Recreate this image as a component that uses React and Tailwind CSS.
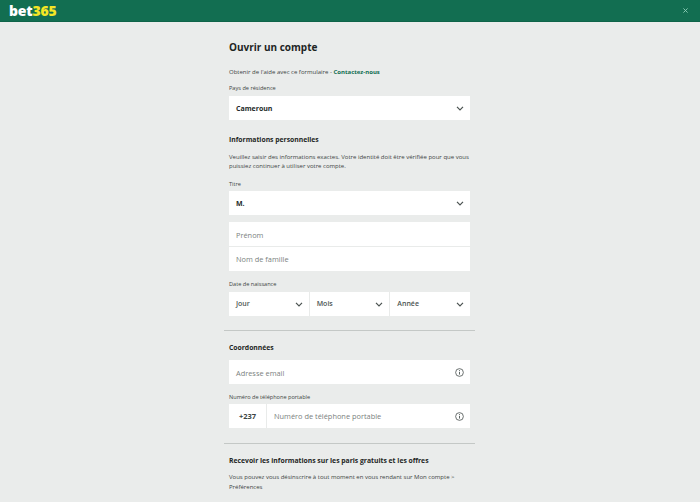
import React from "react";

const font = { fontFamily: '"Open Sans", "Noto Sans", sans-serif' };

function Chevron() {
  return (
    <svg width="8" height="5" viewBox="0 0 8 5" fill="none" className="shrink-0">
      <path d="M1 0.8l3 3 3-3" stroke="#4a5250" strokeWidth="1.2" />
    </svg>
  );
}

function Info() {
  return (
    <svg width="9" height="9" viewBox="0 0 10 10" fill="none" className="shrink-0">
      <circle cx="5" cy="5" r="4.3" stroke="#4a5250" strokeWidth="0.9" />
      <path d="M5 4.300v3M5 2.400v1" stroke="#4a5250" strokeWidth="1" />
    </svg>
  );
}

function Label({ children, className = "" }) {
  return <div className={`text-[5.600px] leading-[8px] text-[#3d4543] ${className}`}>{children}</div>;
}

function Select({ value, className = "" }) {
  return (
    <div className={`flex h-6 items-center justify-between bg-white pl-[7px] pr-[6px] ${className}`}>
      <span className="pt-[2px] text-[7px] font-bold text-[#222a28]">{value}</span>
      <Chevron />
    </div>
  );
}

function DatePart({ value, border }) {
  return (
    <div className={`flex h-6 flex-1 items-center justify-between pl-[7px] pr-[6px] ${border ? "border-r border-[#e9ebea]" : ""}`}>
      <span className="text-[7px] font-semibold text-[#4d5452]">{value}</span>
      <Chevron />
    </div>
  );
}

export default function App() {
  return (
    <div className="h-[502px] w-[700px] overflow-hidden bg-[#eaeceb]" style={font}>
      <header className="flex h-[22px] items-center justify-between border-b border-[#0f6449] bg-[#126e51] pl-[9px] pr-[12px]">
        <div className="text-[14px] font-extrabold leading-none tracking-[-0.2px]">
          <span className="text-white">bet</span>
          <span className="text-[#f5e625]">365</span>
        </div>
        <svg width="5" height="5" viewBox="0 0 6 6" fill="none">
          <path d="M0.5 0.5l5 5M5.500 0.5l-5 5" stroke="#8fd0b8" strokeWidth="1.100" />
        </svg>
      </header>

      <main className="ml-[224px] w-[251px] px-[5px]">
        <h1 className="mt-[17px] text-[10px] font-bold leading-4 text-[#1d2523]">Ouvrir un compte</h1>
        <p className="mt-[13px] text-[6px] leading-[8px] text-[#3d4543]">
          Obtenir de l'aide avec ce formulaire - <span className="font-bold text-[#126e51]">Contactez-nous</span>
        </p>
        <Label className="mt-[8px]">Pays de résidence</Label>
        <Select value="Cameroun" className="mt-[4px]" />

        <h2 className="mt-[14px] text-[6.800px] font-bold leading-3 text-[#1d2523]">Informations personnelles</h2>
        <p className="mt-[7px] text-[6px] leading-[9px] text-[#3d4543]">
          Veuillez saisir des informations exactes. Votre identité doit être vérifiée pour que vous puissiez continuer à utiliser votre compte.
        </p>
        <Label className="mt-[9px]">Titre</Label>
        <Select value="M." className="mt-[3px]" />

        <div className="mt-[7px] flex flex-col bg-white">
          <div className="flex h-[25px] items-center border-b border-[#e9ebea] pl-[7px] pt-[3px] text-[7.400px] text-[#7b8280]">Prénom</div>
          <div className="flex h-6 items-center pl-[7px] pt-[2px] text-[7.400px] text-[#7b8280]">Nom de famille</div>
        </div>

        <Label className="mt-[9px]">Date de naissance</Label>
        <div className="mt-[4px] flex bg-white">
          <DatePart value="Jour" border />
          <DatePart value="Mois" border />
          <DatePart value="Année" />
        </div>

        <div className="-mx-[5px] mt-[14px] h-px bg-[#c4c8c6]" />

        <h2 className="mt-[11px] text-[6.800px] font-bold leading-3 text-[#1d2523]">Coordonnées</h2>
        <div className="mt-[6px] flex h-6 items-center justify-between bg-white pl-[7px] pr-[6px]">
          <span className="pt-[3px] text-[7.400px] text-[#7b8280]">Adresse email</span>
          <Info />
        </div>
        <Label className="mt-[9px]">Numéro de téléphone portable</Label>
        <div className="mt-[3px] flex h-6 items-center bg-white pr-[6px]">
          <div className="flex h-full w-[38px] items-center justify-center border-r border-[#e9ebea] pt-[2px] text-[7.500px] font-bold text-[#3d4543]">+237</div>
          <span className="flex-1 pl-[7px] pt-[2px] text-[7.400px] text-[#7b8280]">Numéro de téléphone portable</span>
          <Info />
        </div>

        <div className="-mx-[5px] mt-[15px] h-px bg-[#c4c8c6]" />

        <h2 className="mt-[11px] text-[6.800px] font-bold leading-3 text-[#1d2523]">Recevoir les informations sur les paris gratuits et les offres</h2>
        <p className="mt-[5px] text-[6px] leading-[10px] text-[#3d4543]">
          Vous pouvez vous désinscrire à tout moment en vous rendant sur Mon compte &gt; Préférences
        </p>
      </main>
    </div>
  );
}
